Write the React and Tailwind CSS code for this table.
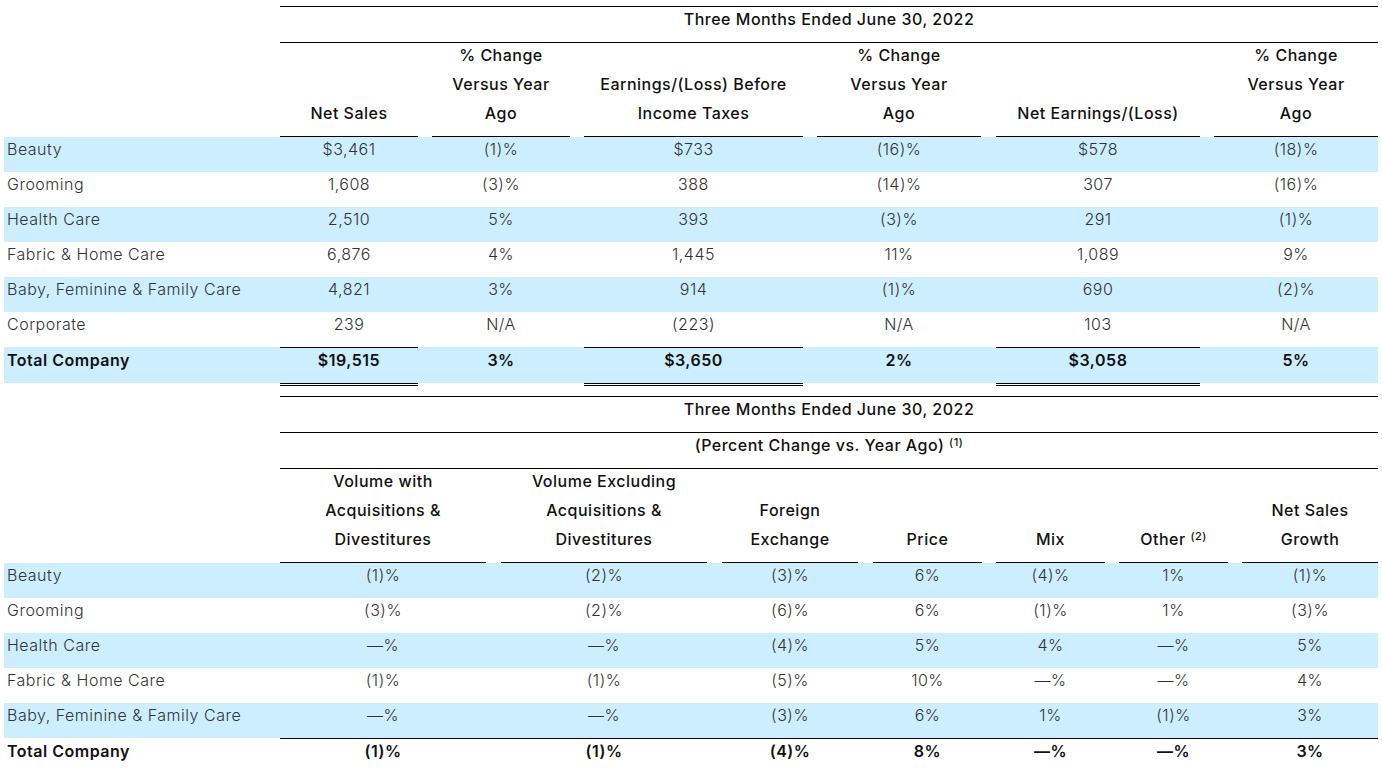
import React from 'react';

const topRows = [
  ['Beauty', '$3,461', '(1)%', '$733', '(16)%', '$578', '(18)%'],
  ['Grooming', '1,608', '(3)%', '388', '(14)%', '307', '(16)%'],
  ['Health Care', '2,510', '5%', '393', '(3)%', '291', '(1)%'],
  ['Fabric & Home Care', '6,876', '4%', '1,445', '11%', '1,089', '9%'],
  ['Baby, Feminine & Family Care', '4,821', '3%', '914', '(1)%', '690', '(2)%'],
  ['Corporate', '239', 'N/A', '(223)', 'N/A', '103', 'N/A'],
];
const topTotal = ['Total Company', '$19,515', '3%', '$3,650', '2%', '$3,058', '5%'];

const topHeaders = [
  ['Net Sales'],
  ['% Change', 'Versus Year', 'Ago'],
  ['Earnings/(Loss) Before', 'Income Taxes'],
  ['% Change', 'Versus Year', 'Ago'],
  ['Net Earnings/(Loss)'],
  ['% Change', 'Versus Year', 'Ago'],
];

const mixRows = [
  ['Beauty', '(1)%', '(2)%', '(3)%', '6%', '(4)%', '1%', '(1)%'],
  ['Grooming', '(3)%', '(2)%', '(6)%', '6%', '(1)%', '1%', '(3)%'],
  ['Health Care', '—%', '—%', '(4)%', '5%', '4%', '—%', '5%'],
  ['Fabric & Home Care', '(1)%', '(1)%', '(5)%', '10%', '—%', '—%', '4%'],
  ['Baby, Feminine & Family Care', '—%', '—%', '(3)%', '6%', '1%', '(1)%', '3%'],
];
const mixTotal = ['Total Company', '(1)%', '(1)%', '(4)%', '8%', '—%', '—%', '3%'];

const mixHeaders = [
  ['Volume with', 'Acquisitions &', 'Divestitures'],
  ['Volume Excluding', 'Acquisitions &', 'Divestitures'],
  ['Foreign', 'Exchange'],
  ['Price'],
  ['Mix'],
  ['Other', '(2)'],
  ['Net Sales', 'Growth'],
];

const HeaderCell = ({ lines, other }) => (
  <td className="align-bottom text-center font-medium text-[#111] leading-[29px] pb-[6px] border-b border-black">
    <div className="-translate-y-[2px]">
      {other ? (
        <>
          Other <sup className="text-[11px]">(2)</sup>
        </>
      ) : (
        lines.map((l, i) => (
          <div key={i} className="whitespace-nowrap">{l}</div>
        ))
      )}
    </div>
  </td>
);

const HeaderRow = ({ headers }) => (
  <tr>
    <td />
    {headers.flatMap((h, j) => [
      j > 0 && <td key={'g' + j} />,
      <HeaderCell key={j} lines={h} other={h[0] === 'Other'} />,
    ])}
  </tr>
);

const DataRow = ({ row, shaded }) => {
  const bg = shaded ? 'bg-[#cceeff]' : 'bg-white';
  return (
    <tr>
      <td className={`${bg} pl-[3px] leading-[24px] pb-[11px] align-top whitespace-nowrap`}>{row[0]}</td>
      {row.slice(1).flatMap((v, j) => [
        j > 0 && <td key={'g' + j} className={bg} />,
        <td key={j} className={`${bg} text-center leading-[24px] pb-[11px] align-top`}>
          {v}
        </td>,
      ])}
    </tr>
  );
};

const TitleRow = ({ span, children }) => (
  <tr>
    <td />
    <td
      colSpan={span}
      className="text-center font-medium text-[#111] leading-[24px] pb-[11px] border-y border-black align-top"
    >
      {children}
    </td>
  </tr>
);

export default function App() {
  return (
    <div className="w-[1382px] h-[769px] overflow-hidden bg-white pt-[6px] pl-[4px] text-[16px] tracking-[0.5px] text-[#333] font-light font-['Inter','Open_Sans',sans-serif]">
      {/* segment results */}
      <table className="w-[1374px] table-fixed border-separate border-spacing-0">
        <colgroup>
          <col className="w-[276px]" />
          <col className="w-[138px]" />
          <col className="w-[14px]" />
          <col className="w-[138px]" />
          <col className="w-[14px]" />
          <col className="w-[219px]" />
          <col className="w-[14px]" />
          <col className="w-[164px]" />
          <col className="w-[15px]" />
          <col className="w-[204px]" />
          <col className="w-[14px]" />
          <col className="w-[164px]" />
        </colgroup>
        <tbody>
          <TitleRow span={11}>Three Months Ended June 30, 2022</TitleRow>
          <HeaderRow headers={topHeaders} />
          {topRows.map((row, i) => (
            <DataRow key={row[0]} row={row} shaded={i % 2 === 0} />
          ))}
          <tr>
            <td className="bg-[#cceeff] bg-clip-padding pl-[3px] pt-[1px] leading-[24px] pb-[11px] align-top font-semibold text-[#111] border-b-[3px] border-transparent whitespace-nowrap">
              {topTotal[0]}
            </td>
            {topTotal.slice(1).flatMap((v, j) => [
              j > 0 && (
                <td key={'g' + j} className="bg-[#cceeff] bg-clip-padding border-b-[3px] border-transparent" />
              ),
              j % 2 === 0 ? (
                <td
                  key={j}
                  className="bg-[#cceeff] bg-clip-padding text-center leading-[24px] pb-[11px] align-top font-semibold text-[#111] border-t border-b-[3px] border-double border-black"
                >
                  {v}
                </td>
              ) : (
                <td
                  key={j}
                  className="bg-[#cceeff] bg-clip-padding text-center pt-[1px] leading-[24px] pb-[11px] align-top font-semibold text-[#111] border-b-[3px] border-transparent"
                >
                  {v}
                </td>
              ),
            ])}
          </tr>
        </tbody>
      </table>

      {/* net sales change drivers */}
      <table className="mt-[10px] w-[1374px] table-fixed border-separate border-spacing-0">
        <colgroup>
          <col className="w-[276px]" />
          <col className="w-[206px]" />
          <col className="w-[15px]" />
          <col className="w-[206px]" />
          <col className="w-[15px]" />
          <col className="w-[136px]" />
          <col className="w-[15px]" />
          <col className="w-[109px]" />
          <col className="w-[14px]" />
          <col className="w-[109px]" />
          <col className="w-[14px]" />
          <col className="w-[109px]" />
          <col className="w-[14px]" />
          <col className="w-[136px]" />
        </colgroup>
        <tbody>
          <TitleRow span={13}>Three Months Ended June 30, 2022</TitleRow>
          <tr>
            <td />
            <td colSpan={13} className="text-center font-medium text-[#111] leading-[24px] pb-[11px] border-b border-black align-top">
              (Percent Change vs. Year Ago) <sup className="text-[11px]">(1)</sup>
            </td>
          </tr>
          <HeaderRow headers={mixHeaders} />
          {mixRows.map((row, i) => (
            <DataRow key={row[0]} row={row} shaded={i % 2 === 0} />
          ))}
          <tr>
            <td className="pl-[3px] pt-[1px] leading-[24px] pb-[11px] align-top font-semibold text-[#111] whitespace-nowrap">
              {mixTotal[0]}
            </td>
            {mixTotal.slice(1).flatMap((v, j) => [
              j > 0 && <td key={'g' + j} className="border-t border-black" />,
              <td
                key={j}
                className="text-center leading-[24px] pb-[11px] align-top font-semibold text-[#111] border-t border-black"
              >
                {v}
              </td>,
            ])}
          </tr>
        </tbody>
      </table>
    </div>
  );
}
